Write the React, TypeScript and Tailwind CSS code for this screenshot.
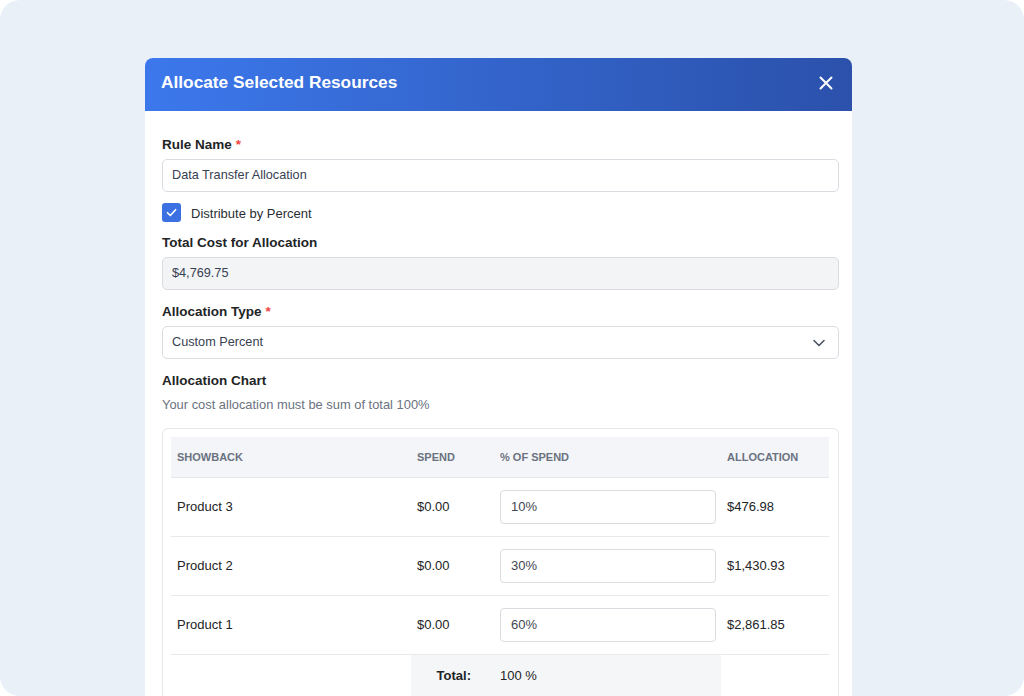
import React from "react";

const rows = [
  { name: "Product 3", spend: "$0.00", pct: "10%", alloc: "$476.98" },
  { name: "Product 2", spend: "$0.00", pct: "30%", alloc: "$1,430.93" },
  { name: "Product 1", spend: "$0.00", pct: "60%", alloc: "$2,861.85" },
];

function Label({ children, req }: { children: React.ReactNode; req?: boolean }) {
  return (
    <div className="text-[13.5px] leading-[20px] font-bold text-[#222426]">
      {children}
      {req && <span className="text-[#ef4444] ml-[4px]">*</span>}
    </div>
  );
}

export default function App() {
  return (
    <div className="w-[1024px] h-[696px] bg-white" style={{ fontFamily: '"Liberation Sans", Arial, sans-serif' }}>
      <div className="w-full h-full rounded-[20px] bg-[#e9f0f7] overflow-hidden pt-[58px] pl-[145px]">
        <div className="w-[707px] h-[700px] bg-white rounded-t-[8px] overflow-hidden">
          <div className="h-[53px] bg-linear-to-r from-[#3c78ec] to-[#2b51ab] flex items-center justify-between pl-[16px] pr-[18px] pb-[3px]">
            <div className="text-white text-[17.3px] font-bold">Allocate Selected Resources</div>
            <svg width="16" height="16" viewBox="0 0 16 16" fill="none" stroke="white" strokeWidth="2" strokeLinecap="round">
              <path d="M2.5 2.5L13.5 13.5M13.5 2.5L2.5 13.5" />
            </svg>
          </div>
          <div className="pl-[17px] pr-[13px] pt-[24px]">
            <Label req>Rule Name</Label>
            <div className="mt-[4px] h-[33px] border border-[#d9dce1] rounded-[5px] flex items-center px-[9px] pt-[1px] text-[12.7px] text-[#374151]">
              Data Transfer Allocation
            </div>
            <div className="mt-[11px] h-[19px] flex items-center gap-[10px]">
              <div className="w-[19px] h-[19px] rounded-[3px] bg-[#3b70e3] flex items-center justify-center">
                <svg width="13" height="13" viewBox="0 0 12 12" fill="none" stroke="white" strokeWidth="1.5" strokeLinecap="round" strokeLinejoin="round">
                  <path d="M2.3 6.2L4.9 8.8L9.8 3.4" />
                </svg>
              </div>
              <div className="text-[13px] leading-[19px] text-[#2b2f33] pt-[2px]">Distribute by Percent</div>
            </div>
            <div className="mt-[11px]">
              <Label>Total Cost for Allocation</Label>
            </div>
            <div className="mt-[4px] h-[33px] border border-[#d9dce1] bg-[#f3f4f6] rounded-[5px] flex items-center px-[9px] pt-[1px] text-[12.7px] text-[#374151]">
              $4,769.75
            </div>
            <div className="mt-[12px]">
              <Label req>Allocation Type</Label>
            </div>
            <div className="mt-[4px] h-[33px] border border-[#d9dce1] rounded-[5px] flex items-center justify-between pl-[9px] pr-[12px] text-[12.7px] text-[#374151]">
              <span className="pt-[1px]">Custom Percent</span>
              <svg width="14" height="14" viewBox="0 0 14 14" fill="none" stroke="#4b5563" strokeWidth="1.6" strokeLinecap="round" strokeLinejoin="round">
                <path d="M2 4.5L7 9.5L12 4.5" />
              </svg>
            </div>
            <div className="mt-[12px]">
              <Label>Allocation Chart</Label>
            </div>
            <div className="mt-[5px] text-[12.9px] leading-[18px] text-[#6b7280]">
              Your cost allocation must be sum of total 100%
            </div>
            <div className="mt-[14px] border border-[#e5e7eb] rounded-[6px] pt-[8px] pl-[8px] pr-[9px]">
              <div className="grid grid-cols-[240px_83px_227px_108px] h-[41px] bg-[#f3f5f8] items-center text-[11px] font-bold text-[#6b7280] border-b border-[#e5e7eb]">
                <div className="pl-[6px]">SHOWBACK</div>
                <div className="pl-[6px]">SPEND</div>
                <div className="pl-[6px]">% OF SPEND</div>
                <div className="pl-[6px]">ALLOCATION</div>
              </div>
              {rows.map((r) => (
                <div key={r.name} className="grid grid-cols-[240px_83px_227px_108px] h-[59px] items-center text-[13px] text-[#222426] border-b border-[#e8eaed]">
                  <div className="pl-[6px]">{r.name}</div>
                  <div className="pl-[6px]">{r.spend}</div>
                  <div className="pl-[6px]">
                    <div className="w-[216px] h-[34px] border border-[#d9dce1] rounded-[4px] flex items-center px-[10px] text-[#3f4752]">
                      {r.pct}
                    </div>
                  </div>
                  <div className="pl-[6px]">{r.alloc}</div>
                </div>
              ))}
              <div className="grid grid-cols-[240px_83px_227px_108px] h-[44px] text-[13px] text-[#222426]">
                <div />
                <div className="bg-[#f5f6f8] flex items-center justify-end pr-[23px] pb-[2px] font-bold">Total:</div>
                <div className="bg-[#f5f6f8] flex items-center pl-[6px] pb-[2px]">100 %</div>
                <div />
              </div>
            </div>
          </div>
        </div>
      </div>
    </div>
  );
}
